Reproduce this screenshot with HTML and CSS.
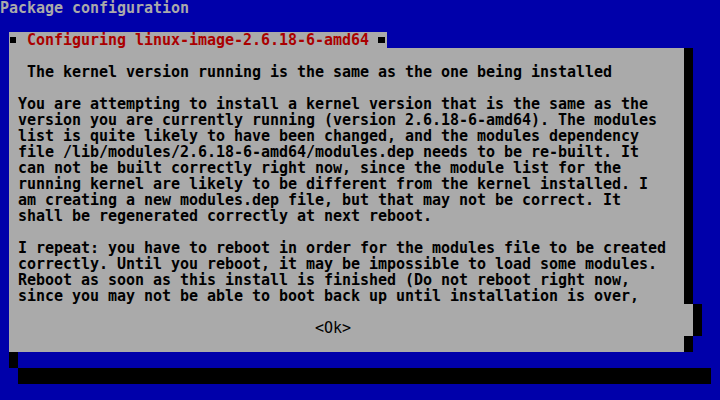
FILE: index.html
```html
<!DOCTYPE html>
<html>
<head>
<meta charset="utf-8">
<link rel="stylesheet" href="styles.css">
</head>
<body>
<div class="screen">
  <div class="line backtitle">Package configuration</div>
  <div class="line"></div>
  <div class="dialog">
    <div class="dlg-title">
      <span class="bullet first"></span>
      <span class="title-text">Configuring linux-image-2.6.18-6-amd64</span>
      <span class="bullet last"></span>
    </div>
    <div class="dlg-main">
      <div class="dlg-box">
        <div class="heading">The kernel version running is the same as the one being installed</div>
        <div class="msg">You are attempting to install a kernel version that is the same as the
version you are currently running (version 2.6.18-6-amd64). The modules
list is quite likely to have been changed, and the modules dependency
file /lib/modules/2.6.18-6-amd64/modules.dep needs to be re-built. It
can not be built correctly right now, since the module list for the
running kernel are likely to be different from the kernel installed. I
am creating a new modules.dep file, but that may not be correct. It
shall be regenerated correctly at next reboot.

I repeat: you have to reboot in order for the modules file to be created
correctly. Until you reboot, it may be impossible to load some modules.
Reboot as soon as this install is finished (Do not reboot right now,
since you may not be able to boot back up until installation is over,</div>
        <div class="buttons"><span class="btn">&lt;Ok&gt;</span></div>
      </div>
      <div class="shadow-col">
        <div class="seg tall black"></div>
        <div class="seg mid grey"></div>
        <div class="seg one black"></div>
      </div>
      <div class="shadow-col">
        <div class="seg tall"></div>
        <div class="seg mid black"></div>
        <div class="seg one"></div>
      </div>
    </div>
    <div class="dlg-foot"><span class="corner"></span></div>
  </div>
  <div class="bottom-bar"></div>
</div>
</body>
</html>
```

FILE: styles.css
```css
html, body {
  margin: 0;
  padding: 0;
  background: #0000aa;
}

.screen {
  width: 720px;
  height: 400px;
  overflow: hidden;
  background: #0000aa;
  font-family: "DejaVu Sans Mono", monospace;
  font-weight: bold;
  font-size: 15px;
  letter-spacing: -0.03px;
  line-height: 16px;
  color: #000000;
}

.line {
  height: 16px;
  white-space: pre;
}

.backtitle {
  color: #aaaaaa;
}

.dialog {
  margin-left: 9px;
}

.dlg-title {
  display: flex;
  width: 378px;
  height: 16px;
  background: #aaaaaa;
  gap: 9px;
}

.bullet {
  width: 9px;
  height: 16px;
  flex: none;
}

.bullet::before {
  content: "";
  display: block;
  width: 7px;
  height: 6px;
  margin-top: 5px;
  background: #000000;
}

.bullet.first::before {
  margin-left: 1px;
  width: 6px;
}

.title-text {
  color: #aa0000;
  white-space: pre;
  width: 342px;
  flex: none;
}

.dlg-main {
  display: flex;
  height: 304px;
}

.dlg-box {
  width: 675px;
  height: 304px;
  background: #aaaaaa;
  flex: none;
}

.heading {
  padding: 16px 0 0 18px;
  height: 16px;
  white-space: pre;
}

.msg {
  margin-top: 16px;
  padding-left: 9px;
  white-space: pre;
  height: 208px;
}

.buttons {
  margin-top: 16px;
  padding-left: 306px;
  height: 16px;
}

.btn {
  font-weight: normal;
  white-space: pre;
}

.shadow-col {
  width: 9px;
  display: flex;
  flex-direction: column;
  flex: none;
}

.seg.tall { height: 256px; }
.seg.mid { height: 32px; }
.seg.one { height: 16px; }
.seg.black { background: #000000; }
.seg.grey { background: #aaaaaa; }

.dlg-foot {
  height: 16px;
}

.corner {
  display: block;
  width: 9px;
  height: 16px;
  background: #000000;
}

.bottom-bar {
  margin-left: 18px;
  width: 693px;
  height: 16px;
  background: #000000;
}
```
